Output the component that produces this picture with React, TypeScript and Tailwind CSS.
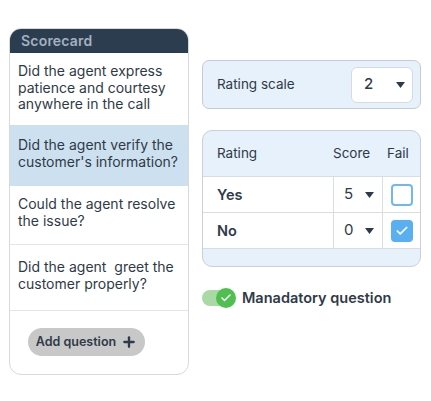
import { Check, Plus } from 'lucide-react';

const questions = [
  { text: 'Did the agent express patience and courtesy anywhere in the call', h: 'h-[72px]', pt: 'pt-[10px]', active: false },
  { text: "Did the agent verify the customer's information?", h: 'h-[61px]', pt: 'pt-[12px]', active: true },
  { text: 'Could the agent resolve the issue?', h: 'h-[59px]', pt: 'pt-[10px]', active: false },
  { text: 'Did the agent\u00a0 greet the customer properly?', h: 'h-[66px]', pt: 'pt-[14px]', active: false },
];

function Caret({ className = '' }: { className?: string }) {
  return (
    <svg width="9" height="6" viewBox="0 0 9 6" className={className}>
      <path d="M0 0 L9 0 L4.5 6 Z" fill="#2f3a48" />
    </svg>
  );
}

function ScoreRow({ label, score, fail }: { label: string; score: string; fail: boolean }) {
  return (
    <div className="flex h-[36px] border-t border-[#d8dde2] bg-white">
      <div className="flex-1 flex items-center pl-[14px] text-[14.5px] font-semibold text-[#2f3a48]">{label}</div>
      <div className="w-[49px] border-l border-[#d8dde2] flex items-center pl-[10px] gap-[12px] text-[15px] text-[#2f3a48]">
        <span>{score}</span>
        <Caret />
      </div>
      <div className="w-[38px] border-l border-[#d8dde2] flex items-center justify-center">
        {fail ? (
          <span className="w-[22px] h-[22px] rounded-[4px] bg-[#5aaff0] flex items-center justify-center">
            <Check className="w-[14px] h-[14px] text-white" strokeWidth={3} />
          </span>
        ) : (
          <span className="w-[22px] h-[22px] rounded-[4px] border-2 border-[#72b8ef] bg-white" />
        )}
      </div>
    </div>
  );
}

export default function App() {
  return (
    <div
      className="w-[431px] h-[401px] bg-white flex items-start text-[#2f3a48]"
      style={{ fontFamily: 'Inter, "Noto Sans", sans-serif' }}
    >
      {/* Left: scorecard list */}
      <div className="ml-[9px] mt-[28px] w-[180px] h-[347px] rounded-[12px] border border-[#d6dade] bg-white overflow-hidden flex flex-col">
        <div className="h-[25px] bg-[#2d3d50] flex items-center px-[12px] text-[14px] font-semibold tracking-[0.2px] text-[#a3b1bf] -mx-px -mt-px">
          Scorecard
        </div>
        {questions.map((q, i) => (
          <div
            key={i}
            className={`${q.h} ${q.pt} px-[8px] text-[14px] leading-[16.5px] ${
              q.active ? 'bg-[#cde0ef]' : 'bg-white'
            } ${i >= 2 ? 'border-b border-[#e3e6e9]' : ''}`}
          >
            {q.text}
          </div>
        ))}
        <div className="pl-[18px] pt-[17px]">
          <button
            type="button"
            className="h-[28px] w-[117px] rounded-full bg-[#c8c8c8] flex items-center justify-center gap-[5px] text-[12.5px] font-semibold text-[#2f3a48]"
          >
            Add question
            <Plus className="w-[16px] h-[16px]" strokeWidth={3.5} />
          </button>
        </div>
      </div>

      {/* Right: settings */}
      <div className="ml-[13px] mt-[60px] w-[219px] flex flex-col">
        <div className="h-[49px] rounded-[7px] border border-[#c5cdd4] bg-[#e6f1fb] flex items-center justify-between pl-[14px] pr-[7px]">
          <span className="text-[13.5px]">Rating scale</span>
          <div className="w-[62px] h-[36px] rounded-[6px] border border-[#d5dbe0] bg-white flex items-center justify-between pl-[12px] pr-[7px]">
            <span className="text-[15px] font-medium">2</span>
            <Caret />
          </div>
        </div>

        <div className="mt-[21px] h-[137px] rounded-[10px] border border-[#c9d0d6] bg-[#e6f1fb] overflow-hidden flex flex-col">
          <div className="h-[45px] flex items-center text-[13.5px]">
            <span className="flex-1 pl-[14px]">Rating</span>
            <span className="w-[54px]">Score</span>
            <span className="w-[33px]">Fail</span>
          </div>
          <ScoreRow label="Yes" score="5" fail={false} />
          <ScoreRow label="No" score="0" fail={true} />
          <div className="flex-1 border-t border-[#d8dde2]" />
        </div>

        <div className="mt-[20px] flex items-center">
          <div className="relative w-[34px] h-[20px]">
            <div className="absolute left-0 top-[2px] w-[30px] h-[16px] rounded-full bg-[#a9d9a4]" />
            <div className="absolute right-0 top-0 w-[20px] h-[20px] rounded-full bg-[#4fbf50] flex items-center justify-center">
              <Check className="w-[12px] h-[12px] text-white" strokeWidth={3} />
            </div>
          </div>
          <span className="ml-[6px] text-[14.5px] font-semibold">Manadatory question</span>
        </div>
      </div>
    </div>
  );
}
